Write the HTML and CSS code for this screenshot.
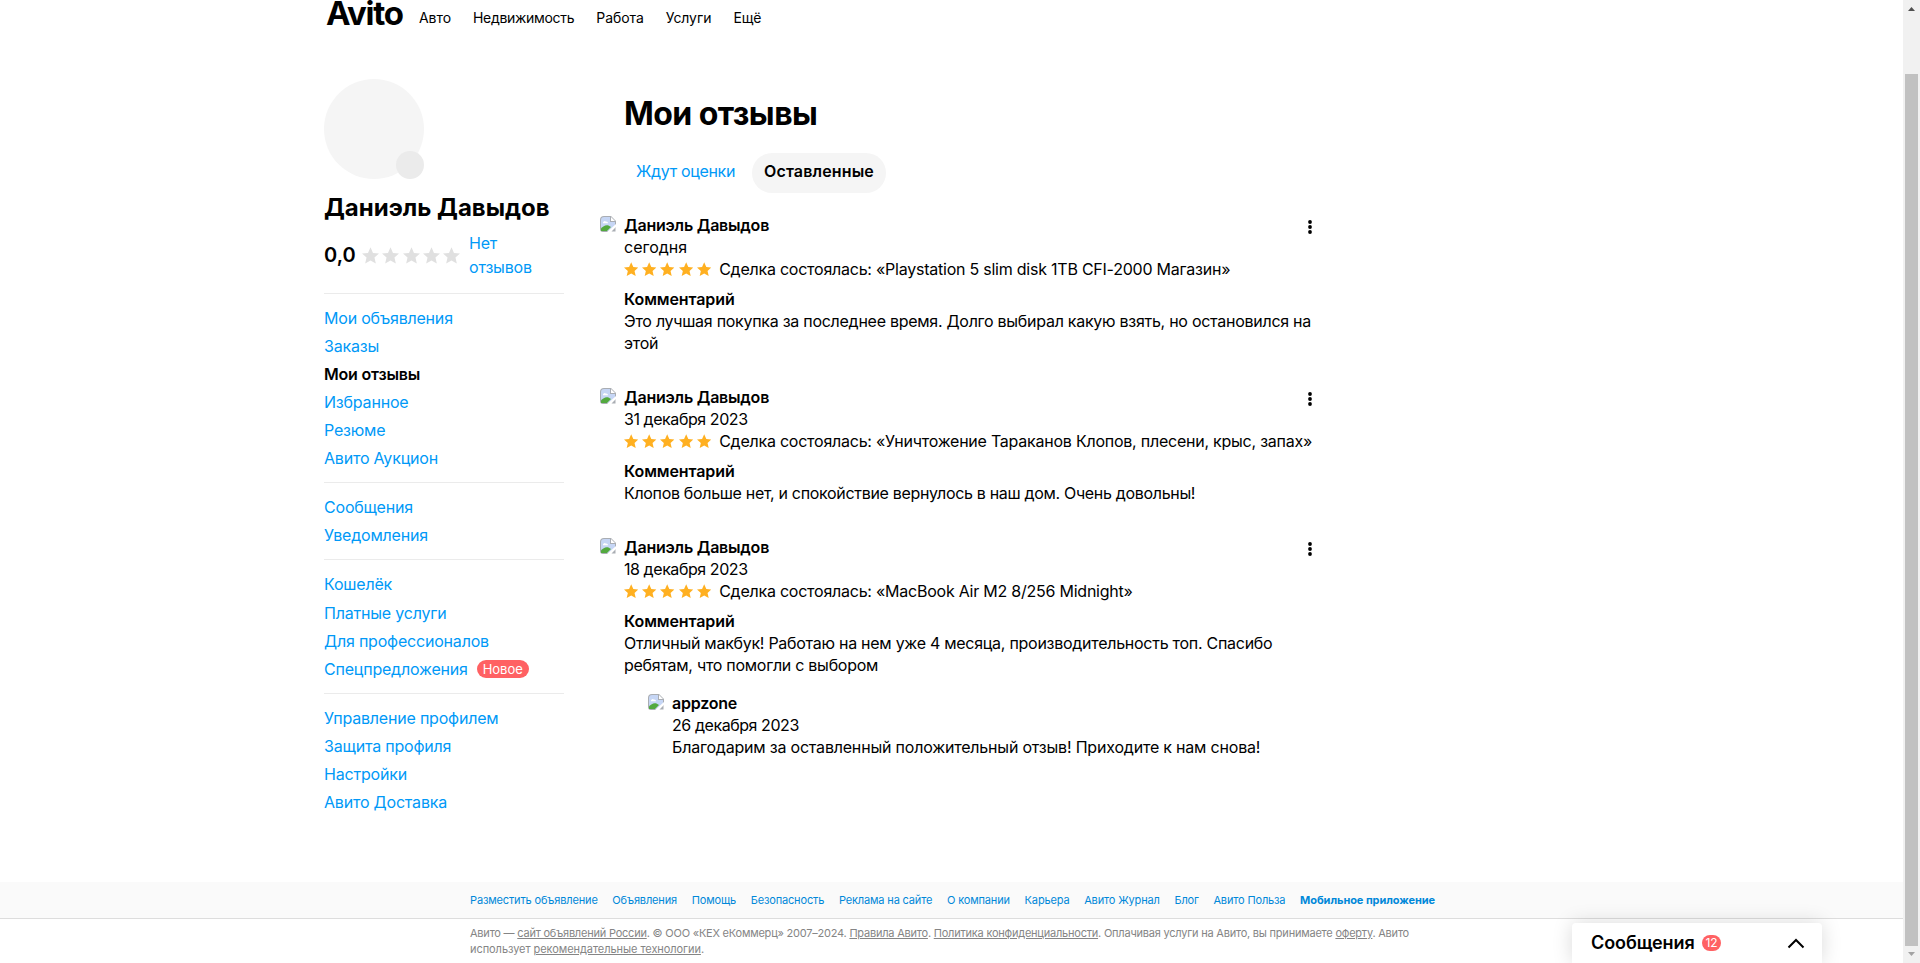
FILE: index.html
```html
<!DOCTYPE html>
<html lang="ru">
<head>
  <meta charset="UTF-8" />
  <meta name="viewport" content="width=device-width, initial-scale=1.0"/>
  <title>Мои отзывы</title>
  <link rel="stylesheet" href="styles.css">
</head>
<body>

  <svg class="sprite" width="0" height="0">
    <symbol id="star" viewBox="0.5 0.3 15 15">
      <path d="M8 .6l2.200 4.900 5.300.5-4 3.600 1.200 5.300L8 12.200l-4.700 2.700 1.200-5.300-4-3.600 5.300-.5z"/>
    </symbol>
    <symbol id="photo" viewBox="0 0 16 16">
      <path d="M4 0h7l5 5v6l-6 5H3a3 3 0 0 1-3-3V4a4 4 0 0 1 4-4z" fill="#a9adb3"/>
      <path d="M4 1h6v5h5v4l-7 5H1V4a3 3 0 0 1 3-3z" fill="#c6d6f5"/>
      <path d="M11 1l4 4h-4z" fill="#fff"/>
      <path d="M3 6.500a1.700 1.700 0 0 1 3-.8 1.500 1.500 0 0 1 2 1.500H3z" fill="#fff"/>
      <path d="M1 15v-2.500C3 10 6 8.500 8.500 9.500L11 11l-4 4z" fill="#53a93f"/>
      <path d="M7 16l9-8v3l-5 5z" fill="#fff"/>
      <path d="M11.500 15.500l4-4v4z" fill="#a9adb3"/>
    </symbol>
    <symbol id="dots" viewBox="0 0 4 14">
      <circle cx="2" cy="2" r="1.900"/><circle cx="2" cy="7" r="1.900"/><circle cx="2" cy="12" r="1.900"/>
    </symbol>
  </svg>

  <header class="header">
    <a class="logo">Avito</a>
    <nav class="nav">
      <a>Авто</a>
      <a class="nav-wide">Недвижимость</a>
      <a>Работа</a>
      <a>Услуги</a>
      <a>Ещё</a>
    </nav>
  </header>

  <div class="container">
    <aside class="sidebar">
      <div class="avatar"><span class="avatar-badge"></span></div>
      <h2 class="user-name">Даниэль Давыдов</h2>
      <div class="rating">
        <span class="score">0,0</span>
        <span class="stars stars-empty">
          <svg><use href="#star"/></svg><svg><use href="#star"/></svg><svg><use href="#star"/></svg><svg><use href="#star"/></svg><svg><use href="#star"/></svg>
        </span>
        <a class="rating-link">Нет<br>отзывов</a>
      </div>
      <ul class="menu">
        <li><a>Мои объявления</a></li>
        <li><a>Заказы</a></li>
        <li class="active"><a>Мои отзывы</a></li>
        <li><a>Избранное</a></li>
        <li><a>Резюме</a></li>
        <li><a>Авито Аукцион</a></li>
      </ul>
      <ul class="menu">
        <li><a>Сообщения</a></li>
        <li><a>Уведомления</a></li>
      </ul>
      <ul class="menu">
        <li class="wallet"><a>Кошелёк</a></li>
        <li><a>Платные услуги</a></li>
        <li><a>Для профессионалов</a></li>
        <li><a>Спецпредложения</a><span class="badge-new">Новое</span></li>
      </ul>
      <ul class="menu">
        <li><a>Управление профилем</a></li>
        <li><a>Защита профиля</a></li>
        <li><a>Настройки</a></li>
        <li><a>Авито Доставка</a></li>
      </ul>
    </aside>

    <main class="content">
      <h1>Мои отзывы</h1>
      <div class="tabs">
        <a class="tab">Ждут оценки</a>
        <a class="tab tab-active">Оставленные</a>
      </div>

      <article class="review">
        <svg class="photo"><use href="#photo"/></svg>
        <div class="review-body">
          <h3>Даниэль Давыдов</h3>
          <p class="today">сегодня</p>
          <div class="deal">
            <span class="stars"><svg><use href="#star"/></svg><svg><use href="#star"/></svg><svg><use href="#star"/></svg><svg><use href="#star"/></svg><svg><use href="#star"/></svg></span>
            <span>Сделка состоялась: «Playstation 5 slim disk 1TB CFI-2000 Магазин»</span>
          </div>
          <h4>Комментарий</h4>
          <p>Это лучшая покупка за последнее время. Долго выбирал какую взять, но остановился на<br>этой</p>
        </div>
        <svg class="dots"><use href="#dots"/></svg>
      </article>

      <article class="review">
        <svg class="photo"><use href="#photo"/></svg>
        <div class="review-body">
          <h3>Даниэль Давыдов</h3>
          <p class="date">31 декабря 2023</p>
          <div class="deal">
            <span class="stars"><svg><use href="#star"/></svg><svg><use href="#star"/></svg><svg><use href="#star"/></svg><svg><use href="#star"/></svg><svg><use href="#star"/></svg></span>
            <span>Сделка состоялась: «Уничтожение Тараканов Клопов, плесени, крыс, запах»</span>
          </div>
          <h4>Комментарий</h4>
          <p class="tight">Клопов больше нет, и спокойствие вернулось в наш дом. Очень довольны!</p>
        </div>
        <svg class="dots"><use href="#dots"/></svg>
      </article>

      <article class="review">
        <svg class="photo"><use href="#photo"/></svg>
        <div class="review-body">
          <h3>Даниэль Давыдов</h3>
          <p class="date">18 декабря 2023</p>
          <div class="deal">
            <span class="stars"><svg><use href="#star"/></svg><svg><use href="#star"/></svg><svg><use href="#star"/></svg><svg><use href="#star"/></svg><svg><use href="#star"/></svg></span>
            <span>Сделка состоялась: «MacBook Air M2 8/256 Midnight»</span>
          </div>
          <h4>Комментарий</h4>
          <p>Отличный макбук! Работаю на нем уже 4 месяца, производительность топ. Спасибо<br>ребятам, что помогли с выбором</p>
          <div class="reply">
            <svg class="photo"><use href="#photo"/></svg>
            <div class="review-body">
              <h3>appzone</h3>
              <p class="date">26 декабря 2023</p>
              <p class="reply-text">Благодарим за оставленный положительный отзыв! Приходите к нам снова!</p>
            </div>
          </div>
        </div>
        <svg class="dots"><use href="#dots"/></svg>
      </article>
    </main>
  </div>

  <footer class="footer">
    <div class="footer-links">
      <a>Разместить объявление</a>
      <a>Объявления</a>
      <a>Помощь</a>
      <a>Безопасность</a>
      <a>Реклама на сайте</a>
      <a>О компании</a>
      <a>Карьера</a>
      <a>Авито Журнал</a>
      <a>Блог</a>
      <a>Авито Польза</a>
      <a class="bold">Мобильное приложение</a>
    </div>
    <p class="legal">
      Авито — <u>сайт объявлений России</u>. © ООО «КЕХ еКоммерц» 2007–2024. <u>Правила Авито</u>. <u>Политика конфиденциальности</u>. Оплачивая услуги на Авито, вы принимаете <u>оферту</u>. Авито<br>
      <span class="legal-last">использует <u>рекомендательные технологии</u>.</span>
    </p>
  </footer>

  <div class="messenger">
    <span class="messenger-title">Сообщения</span>
    <span class="counter">12</span>
    <svg class="chevron" viewBox="0 0 18 11"><path d="M1.500 9.500L9 2l7.500 7.500"/></svg>
  </div>

  <div class="scrollbar">
    <svg viewBox="0 0 7 4"><path d="M0 4L3.500 0 7 4z" fill="#505050"/></svg>
    <div class="thumb"></div>
    <svg viewBox="0 0 7 4"><path d="M0 0h7L3.500 4z" fill="#a3a3a3"/></svg>
  </div>

</body>
</html>
```
FILE: styles.css
```css
* {
  box-sizing: border-box;
}
body {
  margin: 0;
  height: 963px;
  overflow: hidden;
  position: relative;
  background: #fff;
  font-family: Inter, "Liberation Sans", sans-serif;
  font-size: 16px;
  line-height: 22px;
  color: #000;
}
h1, h2, h3, h4, p, ul {
  margin: 0;
  padding: 0;
}
ul {
  list-style: none;
}
.sprite {
  display: block;
  height: 0;
}
.header {
  display: flex;
  height: 79px;
  padding-left: 326px;
}
.logo {
  width: 93px;
  font-size: 33px;
  font-weight: 700;
  line-height: 26px;
  letter-spacing: -1.3px;
}
.nav {
  display: flex;
  gap: 22px;
  font-size: 14px;
  line-height: 36px;
  letter-spacing: -0.07px;
}
.nav-wide {
  letter-spacing: -0.3px;
}
.container {
  display: flex;
  height: 803px;
  padding-left: 324px;
}
.sidebar {
  width: 240px;
}
.avatar {
  position: relative;
  width: 100px;
  height: 100px;
  border-radius: 50%;
  background: #f5f5f5;
}
.avatar-badge {
  position: absolute;
  right: 0;
  bottom: 0;
  width: 28px;
  height: 28px;
  border-radius: 50%;
  background: #ebebeb;
}
.user-name {
  margin: 13px 0 1px;
  font-size: 24px;
  line-height: 32px;
  white-space: nowrap;
}
.rating {
  display: flex;
  align-items: center;
  height: 60px;
}
.score {
  width: 38px;
  font-size: 20px;
  font-weight: 600;
}
.stars {
  display: flex;
  gap: 3.8px;
  fill: #ffb021;
}
.stars svg {
  width: 14.4px;
  height: 14.4px;
}
.stars-empty {
  gap: 3.3px;
  width: 107px;
  fill: #e0e0e0;
}
.stars-empty svg {
  width: 17px;
  height: 17px;
}
.rating-link, .menu a, .tab {
  color: #0099f7;
  letter-spacing: -0.2px;
}
.rating-link {
  line-height: 24px;
}
.menu {
  border-top: 1px solid #ebebeb;
  padding: 10px 0;
}
.rating + .menu {
  margin-top: 8px;
}
.menu li {
  display: flex;
  align-items: center;
  height: 28px;
}
.menu .wallet {
  padding-bottom: 1px;
  height: 29px;
}
.menu .active a {
  color: #000;
  font-weight: 600;
}
.badge-new {
  margin-left: 9px;
  height: 18px;
  width: 52px;
  border-radius: 9px;
  background: #ff6163;
  color: #fff;
  font-size: 13px;
  line-height: 18px;
  text-align: center;
}
.content {
  margin-left: 60px;
  width: 690px;
}
h1 {
  margin-top: 15px;
  font-size: 32px;
  line-height: 40px;
  letter-spacing: -0.55px;
}
.tabs {
  display: flex;
  gap: 5px;
  margin-top: 19px;
}
.tab {
  height: 40px;
  padding: 7px 12px 0;
  border-radius: 20px;
  letter-spacing: -0.33px;
}
.tab-active {
  background: #f5f5f5;
  color: #000;
  font-weight: 600;
  letter-spacing: 0.15px;
}
.review, .reply {
  display: flex;
  margin-left: -24px;
}
.review {
  margin-top: 32px;
  letter-spacing: -0.27px;
}
.tabs + .review {
  margin-top: 21px;
}
.photo {
  flex: none;
  width: 16px;
  height: 16px;
  margin: 2px 8px 0 0;
}
.review-body {
  flex: 1;
  min-width: 0;
  white-space: nowrap;
}
h3, h4 {
  font-size: 16px;
  font-weight: 600;
  letter-spacing: -0.22px;
}
h4 {
  margin-top: 8px;
  letter-spacing: -0.1px;
}
.today {
  letter-spacing: 0;
}
.date {
  letter-spacing: -0.43px;
}
.tight {
  letter-spacing: -0.32px;
}
.reply-text {
  letter-spacing: -0.2px;
}
.deal {
  display: flex;
  align-items: center;
  gap: 8px;
  height: 22px;
  letter-spacing: -0.235px;
}
.dots {
  flex: none;
  width: 4px;
  height: 14px;
  margin: 6px 2px 0 0;
}
.reply {
  margin: 16px 0 0 24px;
}
.footer-links {
  display: flex;
  gap: 14.7px;
  height: 37px;
  padding-left: 470px;
  border-bottom: 1px solid #ddd;
  background: #fafafa;
  color: #0088d9;
  font-size: 11px;
  line-height: 36px;
  letter-spacing: -0.15px;
}
.bold {
  font-weight: 700;
  letter-spacing: -0.06px;
}
.legal {
  padding: 6px 0 0 470px;
  color: #858585;
  font-size: 11px;
  line-height: 16px;
  letter-spacing: -0.22px;
}
.legal-last {
  letter-spacing: -0.06px;
}
.messenger {
  position: absolute;
  left: 1572px;
  bottom: 0;
  display: flex;
  align-items: center;
  width: 250px;
  height: 40px;
  padding: 0 17px 0 19px;
  border-radius: 4px 4px 0 0;
  background: #fff;
  box-shadow: 0 0 20px rgba(0, 0, 0, 0.15);
}
.messenger-title {
  width: 105px;
  font-size: 18px;
  font-weight: 600;
  letter-spacing: -0.1px;
}
.counter {
  margin-left: 6px;
  width: 19px;
  height: 16px;
  border-radius: 8px;
  background: #ff6163;
  color: #fff;
  font-size: 12px;
  line-height: 16px;
  text-align: center;
}
.chevron {
  width: 18px;
  height: 11px;
  margin-left: auto;
  fill: none;
  stroke: #000;
  stroke-width: 2;
}
.scrollbar {
  position: absolute;
  top: 0;
  right: 0;
  display: flex;
  flex-direction: column;
  align-items: center;
  justify-content: space-between;
  width: 17px;
  height: 963px;
  padding: 7px 0;
  background: #f1f1f1;
}
.scrollbar svg {
  width: 7px;
  height: 4px;
}
.thumb {
  width: 13px;
  height: 872px;
  margin-top: auto;
  margin-bottom: 6px;
  background: #c1c1c1;
}
```
